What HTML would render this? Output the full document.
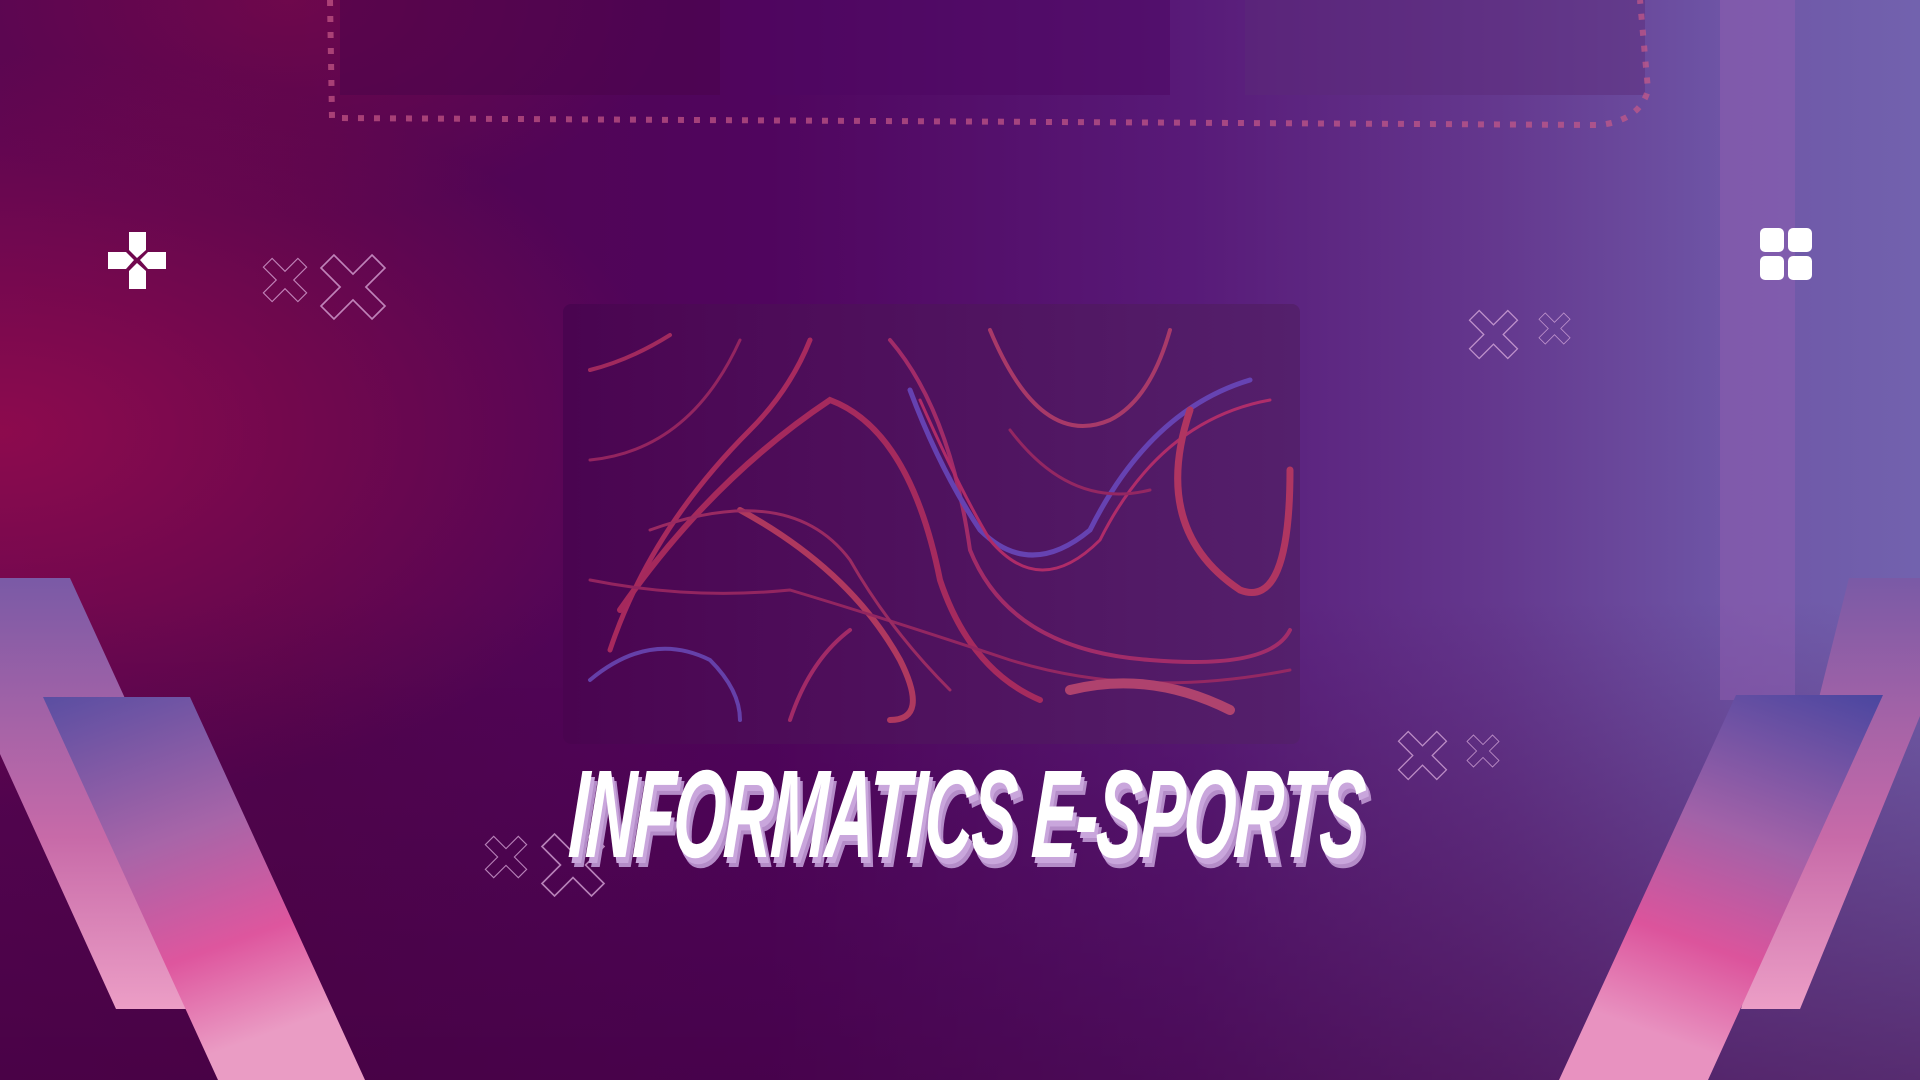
<!DOCTYPE html>
<html><head><meta charset="utf-8"><style>
html,body{margin:0;padding:0}
body{width:1920px;height:1080px;overflow:hidden;position:relative;
background:linear-gradient(90deg,#560552 0%,#52054e 15%,#50055e 40%,#581a78 62%,#64388e 78%,#6e55a6 90%,#7262ae 100%);
font-family:"Liberation Sans",sans-serif}
.abs{position:absolute}
.title{position:absolute;left:574px;top:740px;width:900px;font-weight:bold;font-style:italic;font-size:125px;line-height:150px;
color:#fff;letter-spacing:-3px;transform:scaleX(0.54) skewX(-6deg);transform-origin:0 0;white-space:nowrap;
text-shadow:6px 6px 0 #c9a6dc,11px 10px 0 #b48cc8}
</style></head><body>
<svg class="abs" style="left:0;top:0" width="1920" height="1080">
<defs>
<radialGradient id="rl" cx="0" cy="0.4" r="0.35"><stop offset="0" stop-color="#9a0c4c" stop-opacity=".8"/><stop offset="1" stop-color="#9a0c4c" stop-opacity="0"/></radialGradient>
<radialGradient id="tl" cx="0.15" cy="0" r="0.2"><stop offset="0" stop-color="#8a0a4a" stop-opacity=".5"/><stop offset="1" stop-color="#8a0a4a" stop-opacity="0"/></radialGradient>
<linearGradient id="bot" x1="0" y1="0" x2="0" y2="1"><stop offset="0" stop-color="#400040" stop-opacity="0"/><stop offset="1" stop-color="#40003e" stop-opacity=".55"/></linearGradient>
<linearGradient id="mon" x1="0" y1="0" x2="1" y2="0"><stop offset="0" stop-color="#4a0450"/><stop offset="1" stop-color="#54206c"/></linearGradient>
<linearGradient id="lb" x1="0" y1="0" x2="0" y2="1"><stop offset="0" stop-color="#7a5aa6"/><stop offset=".6" stop-color="#c76aa8"/><stop offset="1" stop-color="#ec9ec6"/></linearGradient>
<linearGradient id="lf" x1="0" y1="0" x2="0.3" y2="1"><stop offset="0" stop-color="#5a4ea2"/><stop offset=".45" stop-color="#a865a8"/><stop offset=".75" stop-color="#de569e"/><stop offset="1" stop-color="#ea9cc4"/></linearGradient>
<linearGradient id="rf" x1="1" y1="0" x2="0.7" y2="1"><stop offset="0" stop-color="#4a46a0"/><stop offset=".45" stop-color="#a262a8"/><stop offset=".75" stop-color="#dc549c"/><stop offset="1" stop-color="#e892c0"/></linearGradient>
<symbol id="x" viewBox="0 0 100 100"><polygon points="3,22 22,3 50,31 78,3 97,22 69,50 97,78 78,97 50,69 22,97 3,78 31,50" fill="none" stroke="#e6b8e6" stroke-opacity=".7" stroke-width="2.5"/></symbol>
</defs>
<rect width="1920" height="1080" fill="url(#rl)"/>
<rect width="1920" height="1080" fill="url(#tl)"/>
<rect x="0" y="600" width="1920" height="480" fill="url(#bot)"/>
<rect x="1720" y="0" width="75" height="700" fill="#9a62b4" opacity=".4"/>
<rect x="340" y="0" width="380" height="95" fill="#4a044a" opacity=".5"/>
<rect x="770" y="0" width="400" height="95" fill="#4e0662" opacity=".5"/>
<rect x="1245" y="0" width="400" height="95" fill="#5a2a78" opacity=".45"/>
<path d="M330 0 L332 118 L1600 125 Q1640 120 1648 90 L1640 0" fill="none" stroke="#c85a88" stroke-width="6" stroke-dasharray="6 10" opacity=".7"/>
<rect x="563" y="304" width="737" height="440" rx="8" fill="url(#mon)"/>
<g transform="translate(590,330)" fill="none" stroke-linecap="round" opacity=".85">
<path d="M0 40 Q40 30 80 5" stroke="#b03060" stroke-width="4"/>
<path d="M0 130 Q100 120 150 10" stroke="#a02a62" stroke-width="3"/>
<path d="M20 320 Q60 200 160 100 Q200 60 220 10" stroke="#b83060" stroke-width="5"/>
<path d="M30 280 Q120 150 240 70 Q320 100 350 250 Q380 340 450 370" stroke="#b52f5e" stroke-width="6"/>
<path d="M300 10 Q360 80 380 220 Q420 320 560 330 Q680 340 700 300" stroke="#b0306a" stroke-width="4"/>
<path d="M320 60 Q350 140 390 200 Q440 250 500 200 Q560 80 660 50" stroke="#6a4ac0" stroke-width="5"/>
<path d="M330 70 Q370 160 400 210 Q450 270 510 210 Q570 90 680 70" stroke="#c0306a" stroke-width="3"/>
<path d="M400 0 Q450 120 520 90 Q560 70 580 0" stroke="#b8406a" stroke-width="4"/>
<path d="M150 180 Q260 240 310 330 Q340 390 300 390" stroke="#c04060" stroke-width="6"/>
<path d="M0 250 Q100 270 200 260 Q300 290 420 330 Q550 370 700 340" stroke="#a02a62" stroke-width="3"/>
<path d="M600 80 Q560 200 650 260 Q700 280 700 140" stroke="#c03a60" stroke-width="7"/>
<path d="M0 350 Q60 300 120 330 Q150 360 150 390" stroke="#6a4ab8" stroke-width="4"/>
<path d="M200 390 Q220 330 260 300" stroke="#b0306a" stroke-width="4"/>
<path d="M480 360 Q560 340 640 380" stroke="#c04a70" stroke-width="10"/>
<path d="M60 200 Q200 150 260 230 Q300 300 360 360" stroke="#a83064" stroke-width="3"/>
<path d="M420 100 Q480 180 560 160" stroke="#a02a62" stroke-width="3"/>
</g>
<polygon points="0,578 70,578 267,1009 116,1009 0,754" fill="url(#lb)"/>
<polygon points="43,697 190,697 365,1080 218,1080" fill="url(#lf)"/>
<polygon points="1849,578 1920,578 1920,716 1800,1009 1741,1009" fill="url(#lb)"/>
<polygon points="1736,695 1883,695 1708,1080 1559,1080" fill="url(#rf)"/>
<use href="#x" x="262" y="257" width="46" height="46"/>
<use href="#x" x="319" y="253" width="68" height="68"/>
<use href="#x" x="1468" y="309" width="51" height="51"/>
<use href="#x" x="1538" y="312" width="33" height="33"/>
<use href="#x" x="1397" y="730" width="51" height="51"/>
<use href="#x" x="1466" y="734" width="34" height="34"/>
<use href="#x" x="484" y="835" width="44" height="44"/>
<use href="#x" x="540" y="832" width="66" height="66"/>
<g fill="#fff">
<polygon points="129,232 146,232 146,250 137,258 129,250"/>
<polygon points="129,289 146,289 146,271 137,263 129,271"/>
<polygon points="108,252 126,252 134,260 126,269 108,269"/>
<polygon points="166,252 148,252 140,260 148,269 166,269"/>
</g>
<g fill="#fff">
<rect x="1760" y="228" width="24" height="24" rx="5"/>
<rect x="1788" y="228" width="24" height="24" rx="5"/>
<rect x="1760" y="256" width="24" height="24" rx="5"/>
<rect x="1788" y="256" width="24" height="24" rx="5"/>
</g>
</svg>
<div class="title">INFORMATICS E-SPORTS</div>
</body></html>
